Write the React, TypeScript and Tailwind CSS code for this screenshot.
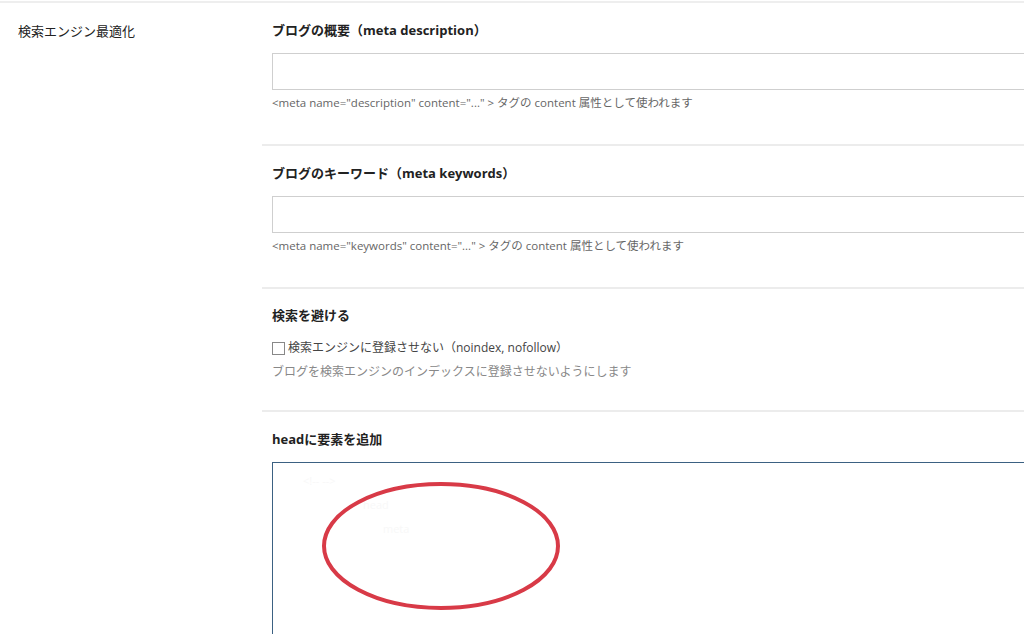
import { useState } from 'react'

const font = { fontFamily: '"Open Sans", "Noto Sans CJK JP", sans-serif' }

function Heading({ children }: { children: React.ReactNode }) {
  return <h3 className="pl-[10px] text-[13px] font-bold text-[#222] leading-[20px]">{children}</h3>
}

function MetaField({ title, help }: { title: string; help: string }) {
  return (
    <div className="pt-[17px] pb-[32px] border-b-2 border-[#ececec]">
      <Heading>{title}</Heading>
      <div className="pl-[10px]">
        <input className="mt-[13px] block w-[800px] h-[37px] border border-[#cfcfcf] bg-white outline-none" />
        <p className="mt-[4px] text-[11.5px] text-[#666] leading-[18px]">{help}</p>
      </div>
    </div>
  )
}

export default function App() {
  const [noindex, setNoindex] = useState(false)

  return (
    <div className="w-[1024px] h-[634px] overflow-hidden bg-white" style={font}>
      <div className="border-t-2 border-[#eeeeee] mt-px" />
      <div className="flex">
        {/* left label */}
        <div className="w-[262px] shrink-0 pl-[18px] pt-[18px] text-[13px] text-[#222] leading-[20px]">
          検索エンジン最適化
        </div>

        {/* settings */}
        <div className="flex-1">
          <MetaField
            title="ブログの概要（meta description）"
            help={'<meta name="description" content="..." > タグの content 属性として使われます'}
          />
          <MetaField
            title="ブログのキーワード（meta keywords）"
            help={'<meta name="keywords" content="..." > タグの content 属性として使われます'}
          />

          <div className="pt-[16px] pb-[29px] border-b-2 border-[#ececec]">
            <Heading>検索を避ける</Heading>
            <label className="pl-[10px] mt-[14px] flex items-center gap-[3px] text-[12px] text-[#444] leading-[18px]">
              <span
                onClick={() => setNoindex(!noindex)}
                className="w-[13px] h-[13px] border border-[#888] bg-white flex items-center justify-center text-[10px]"
              >
                {noindex ? '✓' : ''}
              </span>
              検索エンジンに登録させない（noindex, nofollow）
            </label>
            <p className="pl-[10px] mt-[6px] text-[12px] text-[#888] leading-[18px]">
              ブログを検索エンジンのインデックスに登録させないようにします
            </p>
          </div>

          <div className="pt-[17px]">
            <Heading>headに要素を追加</Heading>
            <div className="pl-[10px]">
              <div className="relative mt-[13px] w-[800px] h-[200px] border border-[#3b6182] bg-white">
                <div className="pt-[6px] pl-[30px] text-[11px] text-[#f8f8f8] leading-[24px]">
                  <div>&lt;!-- --&gt;</div>
                  <div className="pl-[60px]">head</div>
                  <div className="pl-[80px]">meta</div>
                </div>
                <svg className="absolute left-[46px] top-[16px]" width="244" height="134" viewBox="0 0 244 134">
                  <ellipse cx="122" cy="67" rx="117" ry="62" fill="none" stroke="#d83a47" strokeWidth="4" />
                </svg>
              </div>
            </div>
          </div>
        </div>
      </div>
    </div>
  )
}
